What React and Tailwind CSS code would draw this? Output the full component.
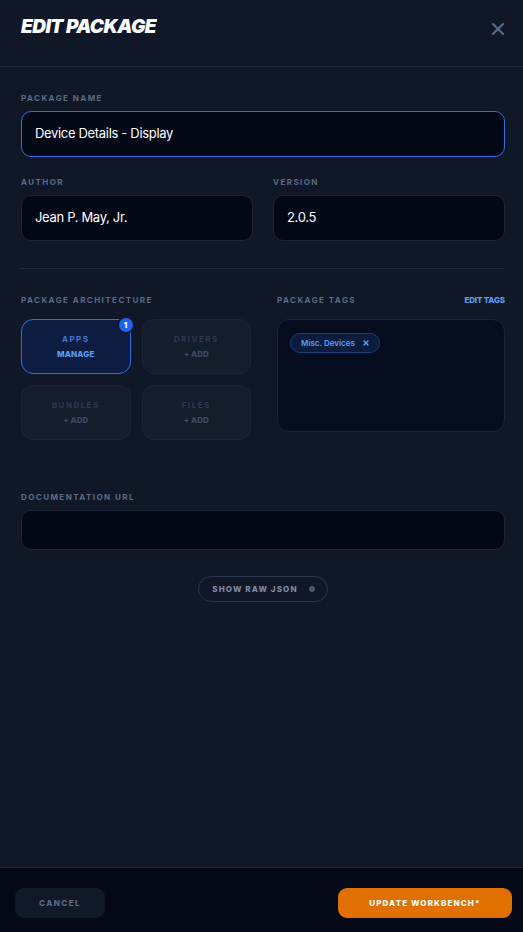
import { X } from "lucide-react";

function Label({ children, className = "" }) {
  return (
    <div className={"text-[8px] leading-[10px] font-bold uppercase tracking-[0.18em] text-[#5b6b84] " + className}>
      {children}
    </div>
  );
}

function ArchCard({ title, action, active, badge }) {
  if (active) {
    return (
      <div className="relative h-[55px] rounded-[12px] border border-[#2f6fe4] bg-[#0d1c40] flex flex-col items-center justify-center gap-[5px]">
        <span className="text-[8px] leading-[10px] font-bold tracking-[0.18em] text-[#3f7ad8]">{title}</span>
        <span className="text-[8px] leading-[10px] font-extrabold tracking-[0.02em] text-[#5b9cf5]">{action}</span>
        {badge && (
          <span className="absolute -top-[4px] -right-[5px] w-[18px] h-[18px] rounded-full bg-[#1f63f0] text-white text-[8px] font-extrabold flex items-center justify-center border-2 border-[#101828]">
            {badge}
          </span>
        )}
      </div>
    );
  }
  return (
    <div className="h-[55px] rounded-[12px] border border-[#1c2536] bg-[#141d2c] flex flex-col items-center justify-center gap-[5px]">
      <span className="text-[8px] leading-[10px] font-bold tracking-[0.18em] text-[#2d3a4f]">{title}</span>
      <span className="text-[8px] leading-[10px] font-extrabold text-[#3c4a60]">{action}</span>
    </div>
  );
}

export default function App() {
  return (
    <div className="w-full h-screen overflow-hidden bg-[#101828] flex flex-col" style={{ fontFamily: "Inter, 'Noto Sans', sans-serif" }}>
      {/* header */}
      <div className="h-[67px] shrink-0 border-b border-[#1e293b] flex items-start justify-between pl-[21px] pr-[18px] pt-[15px]">
        <h1 className="text-[19px] font-black italic tracking-[-0.03em] text-white leading-[24px]">EDIT PACKAGE</h1>
        <X className="mt-[4px] -mr-[3px] text-[#5b6b84]" size={20} strokeWidth={2.6} />
      </div>

      {/* body */}
      <div className="flex-1 pl-[21px] pr-[18px] pt-[26px]">
        <Label>Package Name</Label>
        <div className="mt-[8px] h-[46px] rounded-[10px] border border-[#2f6fe4] bg-[#030817] flex items-center px-[13px] text-[13px] tracking-[-0.025em] text-white">
          Device Details - Display
        </div>

        <div className="mt-[20px] grid grid-cols-2 gap-[20px]">
          <div>
            <Label>Author</Label>
            <div className="mt-[8px] h-[46px] rounded-[10px] border border-[#1c2536] bg-[#030817] flex items-center px-[13px] text-[13px] tracking-[-0.025em] text-white">
              Jean P. May, Jr.
            </div>
          </div>
          <div>
            <Label>Version</Label>
            <div className="mt-[8px] h-[46px] rounded-[10px] border border-[#1c2536] bg-[#030817] flex items-center px-[13px] text-[13px] tracking-[-0.025em] text-white">
              2.0.5
            </div>
          </div>
        </div>

        <div className="mt-[27px] border-t border-[#1e293b]" />

        <div className="mt-[26px] grid grid-cols-[230px_1fr] gap-[26px]">
          <div>
            <Label>Package Architecture</Label>
            <div className="mt-[14px] grid grid-cols-2 gap-[11px]">
              <ArchCard title="APPS" action="MANAGE" active badge="1" />
              <ArchCard title="DRIVERS" action="+ ADD" />
              <ArchCard title="BUNDLES" action="+ ADD" />
              <ArchCard title="FILES" action="+ ADD" />
            </div>
          </div>
          <div>
            <div className="flex items-center justify-between">
              <Label>Package Tags</Label>
              <span className="text-[8px] leading-[10px] font-extrabold tracking-[-0.02em] text-[#5b9cf5]">EDIT TAGS</span>
            </div>
            <div className="mt-[14px] h-[113px] rounded-[12px] border border-[#1c2536] bg-[#060d1e] px-[12px] pt-[13px] flex items-start">
              <span className="inline-flex items-center gap-[7px] h-[20px] rounded-full border border-[#1d3d7a] bg-[#0c1c3d] pl-[10px] pr-[9px] text-[8px] leading-[10px] font-semibold text-[#5b9cf5]">
                Misc. Devices
                <X size={8} strokeWidth={4} />
              </span>
            </div>
          </div>
        </div>

        <Label className="mt-[52px]">Documentation URL</Label>
        <div className="mt-[8px] h-[40px] rounded-[10px] border border-[#1c2536] bg-[#030817]" />

        <div className="mt-[26px] flex justify-center">
          <div className="h-[26px] rounded-full border border-[#2a3649] flex items-center gap-[11px] pl-[13px] pr-[12px]">
            <span className="text-[8px] leading-[10px] font-extrabold tracking-[0.14em] text-[#7d8aa3]">SHOW RAW JSON</span>
            <span className="w-[6px] h-[6px] rounded-full bg-[#4a5770]" />
          </div>
        </div>
      </div>

      {/* footer */}
      <div className="h-[65px] shrink-0 border-t border-[#1e2a45] bg-[#050816] flex items-start justify-between pl-[15px] pr-[11px] pt-[20px]">
        <button className="w-[90px] h-[30px] rounded-[9px] bg-[#111827] text-[8px] font-extrabold tracking-[0.18em] text-[#5b6b84]">
          CANCEL
        </button>
        <button className="w-[174px] h-[30px] rounded-[9px] bg-[#e07000] text-[8px] font-extrabold tracking-[0.14em] text-white">
          UPDATE WORKBENCH*
        </button>
      </div>
    </div>
  );
}
